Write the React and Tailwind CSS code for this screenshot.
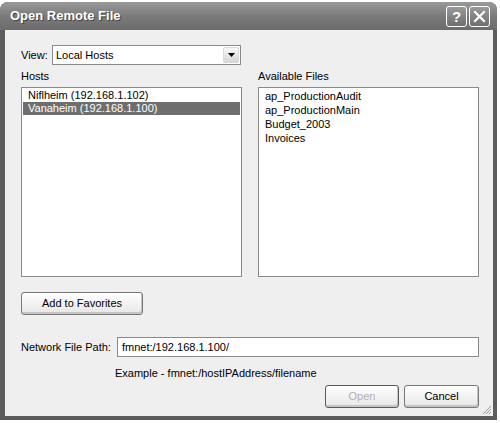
import React from 'react';

const hosts = ['Niflheim (192.168.1.102)', 'Vanaheim (192.168.1.100)'];
const files = ['ap_ProductionAudit', 'ap_ProductionMain', 'Budget_2003', 'Invoices'];

function TitleButton({ children }) {
  return (
    <div className="w-[21px] h-[21px] rounded-[3px] border border-white bg-gradient-to-b from-[#9a9a9a] to-[#6e6e6e] flex items-center justify-center text-white font-bold text-[15px] leading-none">
      {children}
    </div>
  );
}

function XpButton({ label, disabled, className = '' }) {
  return (
    <button
      className={`h-[23px] rounded-[3px] border bg-gradient-to-b from-[#ffffff] to-[#e6e6e6] text-[11px] leading-none shadow-[inset_-1px_-2px_0_#c4c4c4] ${
        disabled ? 'border-[#5a5a5a] text-[#b0b0b0]' : 'border-[#777777] text-black'
      } ${className}`}
    >
      {label}
    </button>
  );
}

export default function App() {
  return (
    <div className="w-[500px] h-[423px] bg-white font-['Liberation_Sans',Arial,sans-serif] text-[11px] text-black">
      <div className="mt-[2px] w-[497px] h-[418px] flex flex-col rounded-t-[8px] overflow-hidden bg-[#5c5c5c]">
        {/* title bar */}
        <div className="h-[28px] shrink-0 flex items-center justify-between pl-[10px] pr-[7px] bg-gradient-to-b from-[#9a9a9a] via-[#7a7a7a] to-[#6c6c6c]">
          <span className="text-white font-bold text-[13px] [text-shadow:1px_1px_0_#444]">Open Remote File</span>
          <div className="flex gap-[2px]">
            <TitleButton>?</TitleButton>
            <TitleButton>
              <svg width="13" height="13" viewBox="0 0 13 13">
                <path d="M2 2 L11 11 M11 2 L2 11" stroke="white" strokeWidth="2.2" strokeLinecap="square" />
              </svg>
            </TitleButton>
          </div>
        </div>

        {/* body */}
        <div className="relative flex-1 mx-[5px] mr-[4px] mb-[4px] bg-[#efefef] flex flex-col pt-[15px] pl-[16px] pr-[14px]">
          <div className="flex items-center h-[20px]">
            <span className="w-[31px]">View:</span>
            <div className="w-[189px] h-[20px] bg-white border border-[#8a8a8a] flex items-center justify-between pl-[3px] pr-[1px]">
              <span>Local Hosts</span>
              <div className="w-[16px] h-[16px] rounded-[2px] border border-[#d8d8d8] bg-gradient-to-b from-[#f8f8f8] to-[#d6d6d6] flex items-center justify-center">
                <svg width="7" height="4" viewBox="0 0 7 4">
                  <path d="M0 0 H7 L3.5 4 Z" fill="black" />
                </svg>
              </div>
            </div>
          </div>

          <div className="flex gap-[16px] mt-[5px]">
            <div className="flex-1 flex flex-col">
              <span className="h-[13px] leading-[13px]">Hosts</span>
              <div className="mt-[4px] h-[190px] bg-white border border-[#8a8a8a] p-[1px] pt-[1px]">
                {hosts.map((h, i) => (
                  <div
                    key={h}
                    className={`h-[13px] leading-[13px] pl-[5px] ${i === 1 ? 'bg-[#6e6e6e] text-white' : ''}`}
                  >
                    {h}
                  </div>
                ))}
              </div>
            </div>
            <div className="flex-1 flex flex-col">
              <span className="h-[13px] leading-[13px]">Available Files</span>
              <div className="mt-[4px] h-[190px] bg-white border border-[#8a8a8a] p-[1px] pl-[6px] pt-[1px]">
                {files.map((f) => (
                  <div key={f} className="h-[14px] leading-[14px]">
                    {f}
                  </div>
                ))}
              </div>
            </div>
          </div>

          <XpButton label="Add to Favorites" className="mt-[15px] w-[122px]" />

          <div className="flex items-center mt-[22px] h-[20px]">
            <span className="w-[96px]">Network File Path:</span>
            <div className="flex-1 h-[20px] bg-white border border-[#8a8a8a] flex items-center pl-[4px]">
              fmnet:/192.168.1.100/
            </div>
          </div>

          <div className="mt-[10px] h-[13px] leading-[13px] pl-[94px]">Example - fmnet:/hostIPAddress/filename</div>

          <div className="flex justify-end gap-[5px] mt-[5px] pr-[-1px]">
            <XpButton label="Open" disabled className="w-[74px]" />
            <XpButton label="Cancel" className="w-[75px]" />
          </div>

          <svg className="absolute right-[1px] bottom-[1px]" width="11" height="11" viewBox="0 0 11 11">
            <path d="M10 2 L2 10 M10 5 L5 10 M10 8 L8 10" stroke="#9a9a9a" strokeWidth="1" />
          </svg>
        </div>
      </div>
    </div>
  );
}
